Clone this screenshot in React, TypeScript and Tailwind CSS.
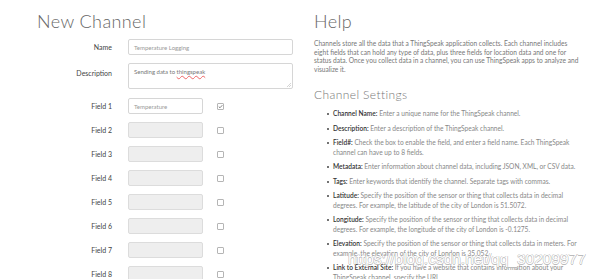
import React from "react";

const body = { fontFamily: "Lato, 'Open Sans', sans-serif" };

function Row({ label, children, top = false }: { label: string; children: React.ReactNode; top?: boolean }) {
  return (
    <div className={`flex ${top ? "items-start" : "items-center"}`}>
      <div className={`w-[75px] shrink-0 text-right text-[7px] text-[#444] ${top ? "pt-[5px]" : ""}`}>{label}</div>
      <div className="ml-[16px] flex items-center">{children}</div>
    </div>
  );
}

function Box({ checked = false }: { checked?: boolean }) {
  return (
    <div className="ml-[14px] w-[7px] h-[7px] border border-[#b5b5b5] rounded-[1px] bg-white flex items-center justify-center">
      {checked && (
        <svg width="5" height="5" viewBox="0 0 10 10">
          <path d="M1.5 5.2 L4 7.6 L8.6 2.4" fill="none" stroke="#666" strokeWidth="1.6" />
        </svg>
      )}
    </div>
  );
}

const items: [string, string][] = [
  ["Channel Name:", "Enter a unique name for the ThingSpeak channel."],
  ["Description:", "Enter a description of the ThingSpeak channel."],
  ["Field#:", "Check the box to enable the field, and enter a field name. Each ThingSpeak channel can have up to 8 fields."],
  ["Metadata:", "Enter information about channel data, including JSON, XML, or CSV data."],
  ["Tags:", "Enter keywords that identify the channel. Separate tags with commas."],
  ["Latitude:", "Specify the position of the sensor or thing that collects data in decimal degrees. For example, the latitude of the city of London is 51.5072."],
  ["Longitude:", "Specify the position of the sensor or thing that collects data in decimal degrees. For example, the longitude of the city of London is -0.1275."],
  ["Elevation:", "Specify the position of the sensor or thing that collects data in meters. For example, the elevation of the city of London is 35.052."],
  ["Link to External Site:", "If you have a website that contains information about your ThingSpeak channel, specify the URL."],
];

export default function App() {
  return (
    <div className="relative w-[600px] h-[279px] overflow-hidden bg-white flex" style={body}>
      <div className="w-[314px] pl-[37px] shrink-0">
        <h1 className="text-[18px] leading-[22px] font-light text-[#666] mt-[10px] tracking-[0.4px]">New Channel</h1>
        <div className="mt-[7px] flex flex-col gap-[8px]">
          <Row label="Name">
            <div className="w-[165px] h-[16px] border border-[#d6d6d6] rounded-[2px] bg-white flex items-center pl-[5px] text-[6px] text-[#999]">
              Temperature Logging
            </div>
          </Row>
          <Row label="Description" top>
            <div className="relative w-[165px] h-[26px] border border-[#d6d6d6] rounded-[2px] bg-white pl-[5px] pt-[3px] text-[6px] text-[#777]">
              Sending data to <span className="underline decoration-wavy decoration-[#e66] decoration-[0.5px]">thingspeak</span>
              <svg className="absolute right-[1px] bottom-[1px]" width="4" height="4" viewBox="0 0 4 4">
                <path d="M0 4 L4 0 M2 4 L4 2" stroke="#aaa" strokeWidth="0.5" />
              </svg>
            </div>
          </Row>
          <div className="mt-[1px]">
            <Row label="Field 1">
              <div className="w-[75px] h-[16px] border border-[#d6d6d6] rounded-[2px] bg-white flex items-center pl-[5px] text-[6px] text-[#999]">
                Temperature
              </div>
              <Box checked />
            </Row>
          </div>
          {[2, 3, 4, 5, 6, 7, 8].map((n) => (
            <Row key={n} label={`Field ${n}`}>
              <div className="w-[75px] h-[16px] border border-[#dcdcdc] rounded-[2px] bg-[#eeeeee]" />
              <Box />
            </Row>
          ))}
        </div>
      </div>
      <div className="flex-1 pr-[21px]">
        <h1 className="text-[18px] leading-[22px] font-light text-[#666] mt-[10px] tracking-[0.4px]">Help</h1>
        <p className="mt-[7px] text-[6.6px] leading-[8.6px] text-[#777]">
          Channels store all the data that a ThingSpeak application collects. Each channel includes eight fields that can hold any type of data, plus three fields for location data and one for status data. Once you collect data in a channel, you can use ThingSpeak apps to analyze and visualize it.
        </p>
        <h2 className="mt-[15px] text-[12px] leading-[14px] font-light text-[#777] tracking-[0.4px]">Channel Settings</h2>
        <ul className="mt-[7px] pl-[19px]">
          {items.map(([k, v]) => (
            <li key={k} className="relative text-[6.6px] leading-[9.5px] text-[#888] mb-[5px]">
              <span className="absolute left-[-6px] top-[4px] w-[2px] h-[2px] rounded-full bg-[#444]" />
              <span className="font-semibold text-[#333]">{k}</span> {v}
            </li>
          ))}
        </ul>
      </div>
      <div
        className="absolute left-[348px] top-[250px] text-[15.5px] leading-[18px] text-white pointer-events-none whitespace-nowrap"
        style={{
          fontFamily: "'Liberation Sans', Arial, sans-serif",
          textShadow: "-0.5px 0 #bbb, 0.5px 0 #bbb, 0 -0.5px #bbb, 0 0.5px #bbb",
        }}
      >
        https://blog.csdn.net/qq_30209977
      </div>
    </div>
  );
}
